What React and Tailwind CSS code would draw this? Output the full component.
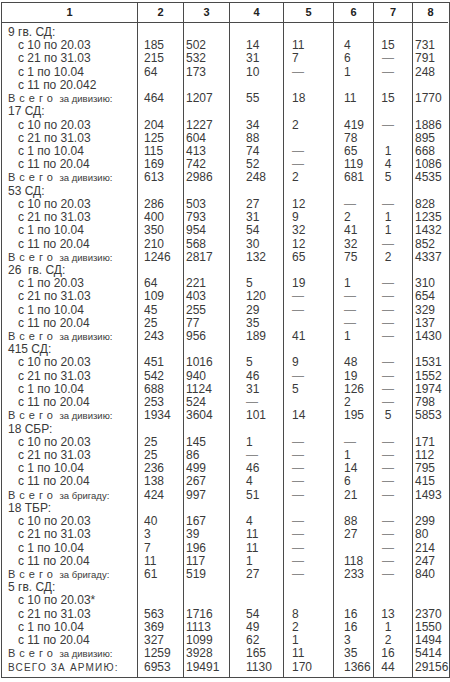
import React from 'react';

const D = '—';

// type: g = group heading, p = period row, t = total, a = army total
const rows = [
  ['g', '9 гв. СД:'],
  ['p', 'с 10 по 20.03', '185', '502', '14', '11', '4', '15', '731'],
  ['p', 'с 21 по 31.03', '215', '532', '31', '7', '6', D, '791'],
  ['p', 'с 1 по 10.04', '64', '173', '10', D, '1', D, '248'],
  ['p', 'с 11 по 20.042'],
  ['t', 'за дивизию:', '464', '1207', '55', '18', '11', '15', '1770'],
  ['g', '17 СД:'],
  ['p', 'с 10 по 20.03', '204', '1227', '34', '2', '419', D, '1886'],
  ['p', 'с 21 по 31.03', '125', '604', '88', '', '78', '', '895'],
  ['p', 'с 1 по 10.04', '115', '413', '74', D, '65', '1', '668'],
  ['p', 'с 11 по 20.04', '169', '742', '52', D, '119', '4', '1086'],
  ['t', 'за дивизию:', '613', '2986', '248', '2', '681', '5', '4535'],
  ['g', '53 СД:'],
  ['p', 'с 10 по 20.03', '286', '503', '27', '12', D, D, '828'],
  ['p', 'с 21 по 31.03', '400', '793', '31', '9', '2', '1', '1235'],
  ['p', 'с 1 по 10.04', '350', '954', '54', '32', '41', '1', '1432'],
  ['p', 'с 11 по 20.04', '210', '568', '30', '12', '32', D, '852'],
  ['t', 'за дивизию:', '1246', '2817', '132', '65', '75', '2', '4337'],
  ['g', '26  гв. СД:'],
  ['p', 'с 1 по 20.03', '64', '221', '5', '19', '1', D, '310'],
  ['p', 'с 21 по 31.03', '109', '403', '120', D, D, D, '654'],
  ['p', 'с 1 по 10.04', '45', '255', '29', D, D, D, '329'],
  ['p', 'с 11 по 20.04', '25', '77', '35', '', D, D, '137'],
  ['t', 'за дивизию:', '243', '956', '189', '41', '1', D, '1430'],
  ['g', '415 СД:'],
  ['p', 'с 10 по 20.03', '451', '1016', '5', '9', '48', D, '1531'],
  ['p', 'с 21 по 31.03', '542', '940', '46', D, '19', D, '1552'],
  ['p', 'с 1 по 10.04', '688', '1124', '31', '5', '126', D, '1974'],
  ['p', 'с 11 по 20.04', '253', '524', D, '', '2', D, '798'],
  ['t', 'за дивизию:', '1934', '3604', '101', '14', '195', '5', '5853'],
  ['g', '18 СБР:'],
  ['p', 'с 10 по 20.03', '25', '145', '1', D, D, D, '171'],
  ['p', 'с 21 по 31.03', '25', '86', D, D, '1', D, '112'],
  ['p', 'с 1 по 10.04', '236', '499', '46', D, '14', D, '795'],
  ['p', 'с 11 по 20.04', '138', '267', '4', D, '6', D, '415'],
  ['t', 'за бригаду:', '424', '997', '51', D, '21', D, '1493'],
  ['g', '18 ТБР:'],
  ['p', 'с 10 по 20.03', '40', '167', '4', D, '88', D, '299'],
  ['p', 'с 21 по 31.03', '3', '39', '11', D, '27', D, '80'],
  ['p', 'с 1 по 10.04', '7', '196', '11', D, '', D, '214'],
  ['p', 'с 11 по 20.04', '11', '117', '1', D, '118', D, '247'],
  ['t', 'за бригаду:', '61', '519', '27', D, '233', D, '840'],
  ['g', '5 гв. СД:'],
  ['p', 'с 10 по 20.03*'],
  ['p', 'с 21 по 31.03', '563', '1716', '54', '8', '16', '13', '2370'],
  ['p', 'с 1 по 10.04', '369', '1113', '49', '2', '16', '1', '1550'],
  ['p', 'с 11 по 20.04', '327', '1099', '62', '1', '3', '2', '1494'],
  ['t', 'за дивизию:', '1259', '3928', '165', '11', '35', '16', '5414'],
  ['a', 'ВСЕГО ЗА АРМИЮ:', '6953', '19491', '1130', '170', '1366', '44', '29156'],
];

const cols = [
  { w: 'w-[136px]', pad: '' },
  { w: 'w-[46px]', pad: 'pl-[6px]' },
  { w: 'w-[46px]', pad: 'pl-[2px]' },
  { w: 'w-[54px]', pad: 'pl-[16px]' },
  { w: 'w-[50px]', pad: 'pl-[8px]' },
  { w: 'w-[40px]', pad: 'pl-[10px]' },
  { w: 'w-[39px]', pad: 'text-center pr-[10px]' },
  { w: 'w-[35px]', pad: 'pl-[2px]' },
];

const Label = ({ row }) => {
  const [type, text] = row;
  if (type === 'g') return <div className="pl-[6px] whitespace-pre">{text}</div>;
  if (type === 'p') return <div className="pl-[16px]">{text}</div>;
  if (type === 't')
    return (
      <div className="pl-[6px] whitespace-nowrap">
        <span className="text-[11px] tracking-[4px]">Всего</span>
        <span className="text-[9.5px]"> {text}</span>
      </div>
    );
  return <div className="pl-[6px] text-[10px] tracking-[1.2px] whitespace-nowrap">{text}</div>;
};

const Cell = ({ value }) => {
  if (value === D) return <span className="text-[#8a8a8a]">{D}</span>;
  return <span>{value || '\u00a0'}</span>;
};

export default function App() {
  return (
    <div className="bg-white w-[450px] h-[682px] pt-[2px] pl-[1px] text-[#3a3a3a]" style={{ fontFamily: '"Liberation Sans", Arial, sans-serif' }}>
      <div className="flex w-[449px] border-[1.5px] border-[#4a4a4a]">
        {cols.map((c, ci) => (
          <div key={ci} className={`${c.w} shrink-0 ${ci < 7 ? 'border-r-[1.5px] border-[#4a4a4a]' : ''}`}>
            <div className="h-[20px] border-b-[1.5px] border-[#4a4a4a] flex items-center justify-center text-[11px] font-bold text-[#222]">
              {ci + 1}
            </div>
            <div className="pt-[3px] pb-[3px] text-[12px] leading-[13.23px]">
              {rows.map((r, ri) => (
                <div key={ri} className={`h-[13.23px] ${ci === 0 ? '' : c.pad} whitespace-nowrap`}>
                  {ci === 0 ? <Label row={r} /> : <Cell value={r[ci + 1]} />}
                </div>
              ))}
            </div>
          </div>
        ))}
      </div>
    </div>
  );
}
